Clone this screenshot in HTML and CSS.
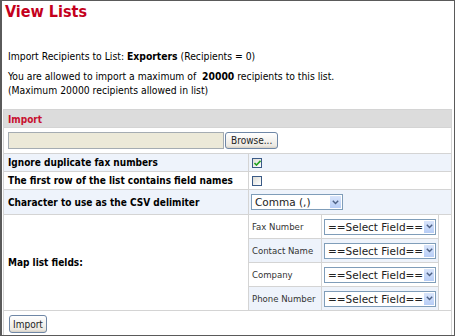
FILE: index.html
```html
<!DOCTYPE html>
<html lang="en">
<head>
    <meta charset="UTF-8">
    <title>View Lists</title>
    <link rel="stylesheet" href="styles.css">
</head>
<body>

<div class="page">
    <h1 class="title">View Lists</h1>
    <p class="info">Import Recipients to List: <b>Exporters</b> (Recipients = 0)</p>
    <p class="info">You are allowed to import a maximum of&nbsp; <b>20000</b> recipients to this list.<br>(Maximum 20000 recipients allowed in list)</p>

    <table class="form">
        <tr class="head">
            <td colspan="2">Import</td>
        </tr>
        <tr class="file-row">
            <td colspan="2">
                <div class="file">
                    <span class="file-box"></span>
                    <span class="btn">Browse...</span>
                </div>
            </td>
        </tr>
        <tr class="alt">
            <th>Ignore duplicate fax numbers</th>
            <td>
                <span class="check">
                    <svg width="7" height="6" viewBox="0 0 7 6"><path d="M0.5 3 L2.5 5 L6.5 0.8" fill="none" stroke="#21a121" stroke-width="1.6"/></svg>
                </span>
            </td>
        </tr>
        <tr>
            <th>The first row of the list contains field names</th>
            <td><span class="check"></span></td>
        </tr>
        <tr class="alt delim">
            <th>Character to use as the CSV delimiter</th>
            <td>
                <span class="select delim-select">
                    <span class="select-text">Comma (,)</span>
                    <span class="arrow"><svg width="7" height="5" viewBox="0 0 7 5"><path d="M0.8 0.8 L3.5 3.6 L6.2 0.8" fill="none" stroke="#4d6185" stroke-width="1.4"/></svg></span>
                </span>
            </td>
        </tr>
        <tr class="map">
            <th>Map list fields:</th>
            <td class="map-cell">
                <table class="fields">
                    <tr>
                        <td class="field-name">Fax Number</td>
                        <td class="field-select"><span class="select"><span class="select-text">==Select Field==</span><span class="arrow"><svg width="7" height="5" viewBox="0 0 7 5"><path d="M0.8 0.8 L3.5 3.6 L6.2 0.8" fill="none" stroke="#4d6185" stroke-width="1.4"/></svg></span></span></td>
                    </tr>
                    <tr class="alt">
                        <td class="field-name">Contact Name</td>
                        <td class="field-select"><span class="select"><span class="select-text">==Select Field==</span><span class="arrow"><svg width="7" height="5" viewBox="0 0 7 5"><path d="M0.8 0.8 L3.5 3.6 L6.2 0.8" fill="none" stroke="#4d6185" stroke-width="1.4"/></svg></span></span></td>
                    </tr>
                    <tr>
                        <td class="field-name">Company</td>
                        <td class="field-select"><span class="select"><span class="select-text">==Select Field==</span><span class="arrow"><svg width="7" height="5" viewBox="0 0 7 5"><path d="M0.8 0.8 L3.5 3.6 L6.2 0.8" fill="none" stroke="#4d6185" stroke-width="1.4"/></svg></span></span></td>
                    </tr>
                    <tr class="alt">
                        <td class="field-name">Phone Number</td>
                        <td class="field-select"><span class="select"><span class="select-text">==Select Field==</span><span class="arrow"><svg width="7" height="5" viewBox="0 0 7 5"><path d="M0.8 0.8 L3.5 3.6 L6.2 0.8" fill="none" stroke="#4d6185" stroke-width="1.4"/></svg></span></span></td>
                    </tr>
                </table>
            </td>
        </tr>
        <tr class="submit-row">
            <td colspan="2"><span class="btn import-btn">Import</span></td>
        </tr>
    </table>
</div>

</body>
</html>
```

FILE: styles.css
```css
* {
    box-sizing: border-box;
}

body, html {
    margin: 0;
    background: white;
    font-family: "DejaVu Sans Condensed", "DejaVu Sans", sans-serif;
    font-stretch: condensed;
    color: black;
}

.page {
    width: 455px;
    height: 336px;
    border: 1px solid #5a5a5a;
    border-left-width: 2px;
    overflow: hidden;
    padding: 0 1px;
}

.title {
    margin: 1px 0 0 2px;
    font-size: 16px;
    line-height: 20px;
    color: #c4001c;
}

.info {
    margin: 27px 0 0 5px;
    font-size: 10.3px;
    line-height: 14px;
}

.info + .info {
    margin-top: 6px;
}

.form {
    margin-top: 12px;
    width: 449px;
    border-collapse: collapse;
    border: 1px solid #d4d4d4;
    font-size: 10px;
}

.form td, .form th {
    border: 1px solid #d4d4d4;
    padding: 0 4px;
    text-align: left;
    vertical-align: middle;
}

.form th {
    width: 245px;
    font-weight: bold;
}

.form tr {
    height: 18px;
}

.alt {
    background-color: #eef3fb;
}

.head {
    background-color: #dcdcdc;
}

.head td {
    height: 16px;
    color: #c8102e;
    font-weight: bold;
    padding-top: 1px;
}

.file-row td {
    height: 26px;
}

.file {
    display: flex;
    align-items: center;
}

.file-box {
    width: 216px;
    height: 17px;
    background-color: #ece9d8;
    border: 1px solid #a5acb2;
    margin-right: 1px;
}

.btn {
    display: inline-flex;
    align-items: center;
    justify-content: center;
    height: 17px;
    padding: 0 5px;
    border: 1px solid #6f87a6;
    border-radius: 3px;
    background: linear-gradient(#ffffff, #ece9e2 85%, #d6d0c5);
    font-family: "DejaVu Sans Condensed", "DejaVu Sans", sans-serif;
    font-size: 10px;
    color: #222;
}

.check {
    display: inline-flex;
    align-items: center;
    justify-content: center;
    width: 10px;
    height: 10px;
    border: 1px solid #3a5a86;
    background: linear-gradient(135deg, #dcdcd6, #ffffff);
    vertical-align: middle;
    margin-left: -1px;
}

.delim td, .delim th {
    height: 25px;
}

.select {
    display: inline-flex;
    align-items: stretch;
    height: 16px;
    border: 1px solid #7f9db9;
    background: white;
    vertical-align: middle;
    font-family: "DejaVu Sans", sans-serif;
    font-stretch: normal;
    font-size: 10.5px;
    line-height: 14px;
    color: #222;
}

.select-text {
    flex: 1;
    padding-left: 3px;
    white-space: nowrap;
}

.delim-select {
    width: 92px;
    margin-left: -2px;
}

.arrow {
    width: 13px;
    display: flex;
    align-items: center;
    justify-content: center;
    background: linear-gradient(#d9e5fb, #b7cdf6);
    border: 1px solid #fff;
}

.map-cell {
    padding: 0 !important;
    vertical-align: top;
}

.fields {
    width: 191px;
    border-collapse: collapse;
    margin: -1px 0 -1px -1px;
}

.fields tr {
    height: 24px;
}

.fields td {
    border: 1px solid #d4d4d4;
}

.field-name {
    width: 74px;
    padding: 0 3px !important;
    color: #333;
    font-size: 9.5px;
    white-space: nowrap;
}

.field-select {
    padding: 0 2px !important;
}

.field-select .select {
    width: 112px;
}

.submit-row td {
    height: 27px;
    border-bottom: 0;
}

.import-btn {
    height: 18px;
    padding: 0 3px;
    margin-left: 1px;
}
```
